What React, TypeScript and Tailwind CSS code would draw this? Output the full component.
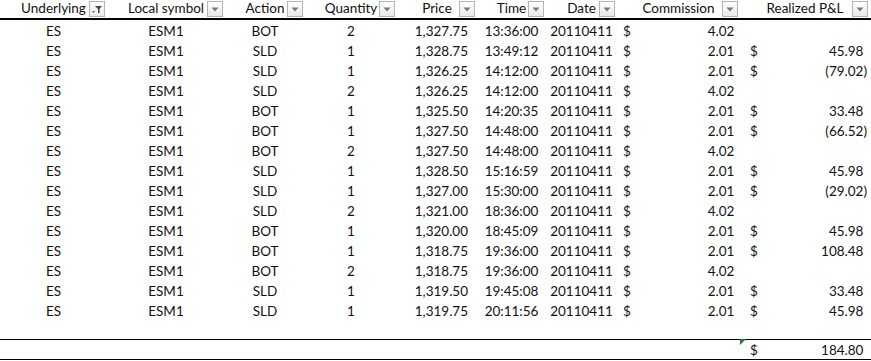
const cols = [
  { label: "Underlying", w: "w-[107px]", filtered: true },
  { label: "Local symbol", w: "w-[118px]" },
  { label: "Action", w: "w-[80px]" },
  { label: "Quantity", w: "w-[92px]" },
  { label: "Price", w: "w-[80px]" },
  { label: "Time", w: "w-[69px]" },
  { label: "Date", w: "w-[71px]" },
  { label: "Commission", w: "w-[123px]" },
  { label: "Realized P&L", w: "w-[130px]" },
];

const trades: [string, number, string, string, string, string][] = [
  ["BOT", 2, "1,327.75", "13:36:00", "4.02", ""],
  ["SLD", 1, "1,328.75", "13:49:12", "2.01", "45.98"],
  ["SLD", 1, "1,326.25", "14:12:00", "2.01", "(79.02)"],
  ["SLD", 2, "1,326.25", "14:12:00", "4.02", ""],
  ["BOT", 1, "1,325.50", "14:20:35", "2.01", "33.48"],
  ["BOT", 1, "1,327.50", "14:48:00", "2.01", "(66.52)"],
  ["BOT", 2, "1,327.50", "14:48:00", "4.02", ""],
  ["SLD", 1, "1,328.50", "15:16:59", "2.01", "45.98"],
  ["SLD", 1, "1,327.00", "15:30:00", "2.01", "(29.02)"],
  ["SLD", 2, "1,321.00", "18:36:00", "4.02", ""],
  ["BOT", 1, "1,320.00", "18:45:09", "2.01", "45.98"],
  ["BOT", 1, "1,318.75", "19:36:00", "2.01", "108.48"],
  ["BOT", 2, "1,318.75", "19:36:00", "4.02", ""],
  ["SLD", 1, "1,319.50", "19:45:08", "2.01", "33.48"],
  ["SLD", 1, "1,319.75", "20:11:56", "2.01", "45.98"],
];

const DropButton = ({ filtered }: { filtered?: boolean }) => (
  <span className="absolute right-[2px] top-[1px] flex h-[16px] w-[16px] items-center justify-center border border-[#b4b4b4] bg-gradient-to-b from-white to-[#e8e8e8]">
    {filtered ? (
      <svg width="12" height="10" viewBox="0 0 12 10">
        <path d="M4 2h7L8.5 5v4h-1.5V5z" fill="#444" />
        <path d="M1 7h3L2.5 9z" fill="#666" />
      </svg>
    ) : (
      <svg width="8" height="5" viewBox="0 0 8 5">
        <path d="M0.5 0.5h7L4 4.5z" fill="#7a7a7a" />
      </svg>
    )}
  </span>
);

// accounting style: negative numbers carry the ")" so positives get a spacer
const Amount = ({ v }: { v: string }) => {
  const neg = v.startsWith("(");
  return (
    <span>
      {v}
      {!neg && <span className="invisible">)</span>}
    </span>
  );
};

const App = () => {
  return (
    <div className="h-[361px] w-[871px] overflow-hidden bg-white text-[13.5px] text-[#111] [font-family:Lato,'Open_Sans',sans-serif]">
      <div className="flex h-[20px] border-b-2 border-black">
        {cols.map((c) => (
          <div key={c.label} className={`relative flex h-[18px] items-center justify-center ${c.w}`}>
            <span className="leading-none">{c.label}</span>
            <DropButton filtered={c.filtered} />
          </div>
        ))}
      </div>

      {trades.map(([action, qty, price, time, comm, pnl], i) => (
        <div key={i} className="flex h-[20px] items-end leading-[18px]">
          <div className="w-[107px] text-center">ES</div>
          <div className="w-[118px] text-center">ESM1</div>
          <div className="w-[80px] text-center">{action}</div>
          <div className="w-[92px] text-center">{qty}</div>
          <div className="w-[80px] pr-[9px] text-right">{price}</div>
          <div className="w-[69px] text-center">{time}</div>
          <div className="w-[71px] text-center">20110411</div>
          <div className="flex w-[123px] justify-between pl-[6px] pr-[2px]">
            <span>$</span>
            <Amount v={comm} />
          </div>
          <div className="flex w-[130px] justify-between pl-[10px] pr-[3px]">
            {pnl && (
              <>
                <span>$</span>
                <Amount v={pnl} />
              </>
            )}
          </div>
        </div>
      ))}

      <div className="h-[20px] border-b border-black" />
      <div className="flex h-[20px] items-end border-b border-black leading-[18px]">
        <div className="w-[740px]" />
        <div className="relative flex w-[130px] justify-between pl-[10px] pr-[3px]">
          <span className="absolute left-0 top-[-2px] h-0 w-0 border-r-[6px] border-t-[6px] border-r-transparent border-t-[#1e7d1e]" />
          <span>$</span>
          <Amount v="184.80" />
        </div>
      </div>
    </div>
  );
};

export default App;
